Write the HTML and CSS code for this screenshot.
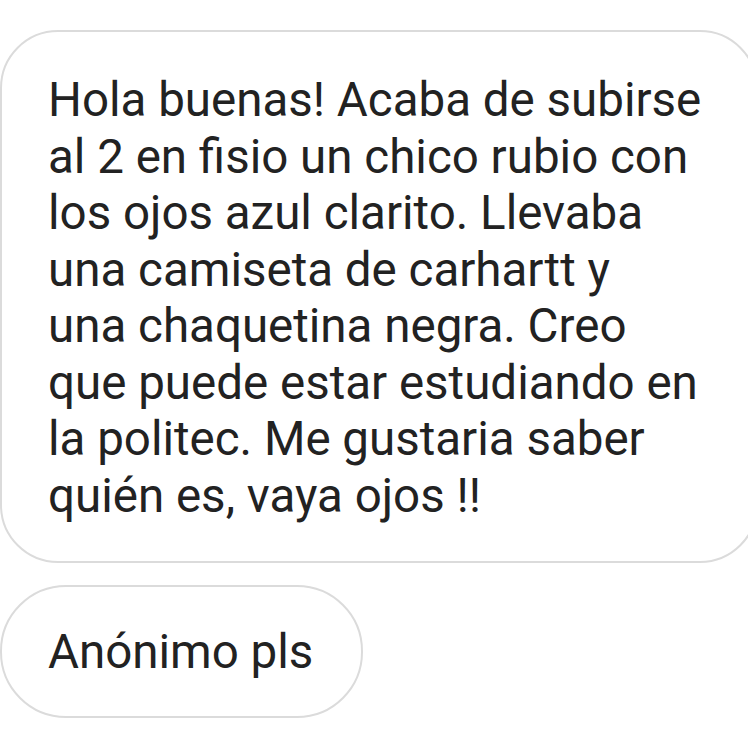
FILE: index.html
```html
<!DOCTYPE html>
<html lang="es">
<head>
<meta charset="utf-8">
<link rel="stylesheet" href="styles.css">
</head>
<body>
<div class="thread">
  <div class="bubble bubble-main">Hola buenas! Acaba de subirse<br>al 2 en fisio un chico rubio con<br>los ojos azul clarito. Llevaba<br>una camiseta de carhartt y<br>una chaquetina negra. Creo<br>que puede estar estudiando en<br>la politec. Me gustaria saber<br>quién es, vaya ojos !!</div>
  <div class="bubble bubble-short">Anónimo pls</div>
</div>
</body>
</html>
```
FILE: styles.css
```css
html, body {
  margin: 0;
  padding: 0;
  background: #ffffff;
  overflow: hidden;
}
.thread {
  display: flex;
  flex-direction: column;
  align-items: flex-start;
  gap: 22px;
  padding-top: 30px;
}
.bubble {
  box-sizing: border-box;
  border: 2px solid #dbdbdb;
  background: #ffffff;
  color: #222222;
  font-family: Roboto, "Noto Sans", sans-serif;
  font-size: 47.5px;
  line-height: 56.5px;
  white-space: nowrap;
}
.bubble-main {
  width: 758px;
  height: 533px;
  border-radius: 58px;
  padding: 40px 40px 37px 46px;
}
.bubble-short {
  height: 133px;
  border-radius: 66px;
  padding: 37px 48px 36px 46px;
}
```
